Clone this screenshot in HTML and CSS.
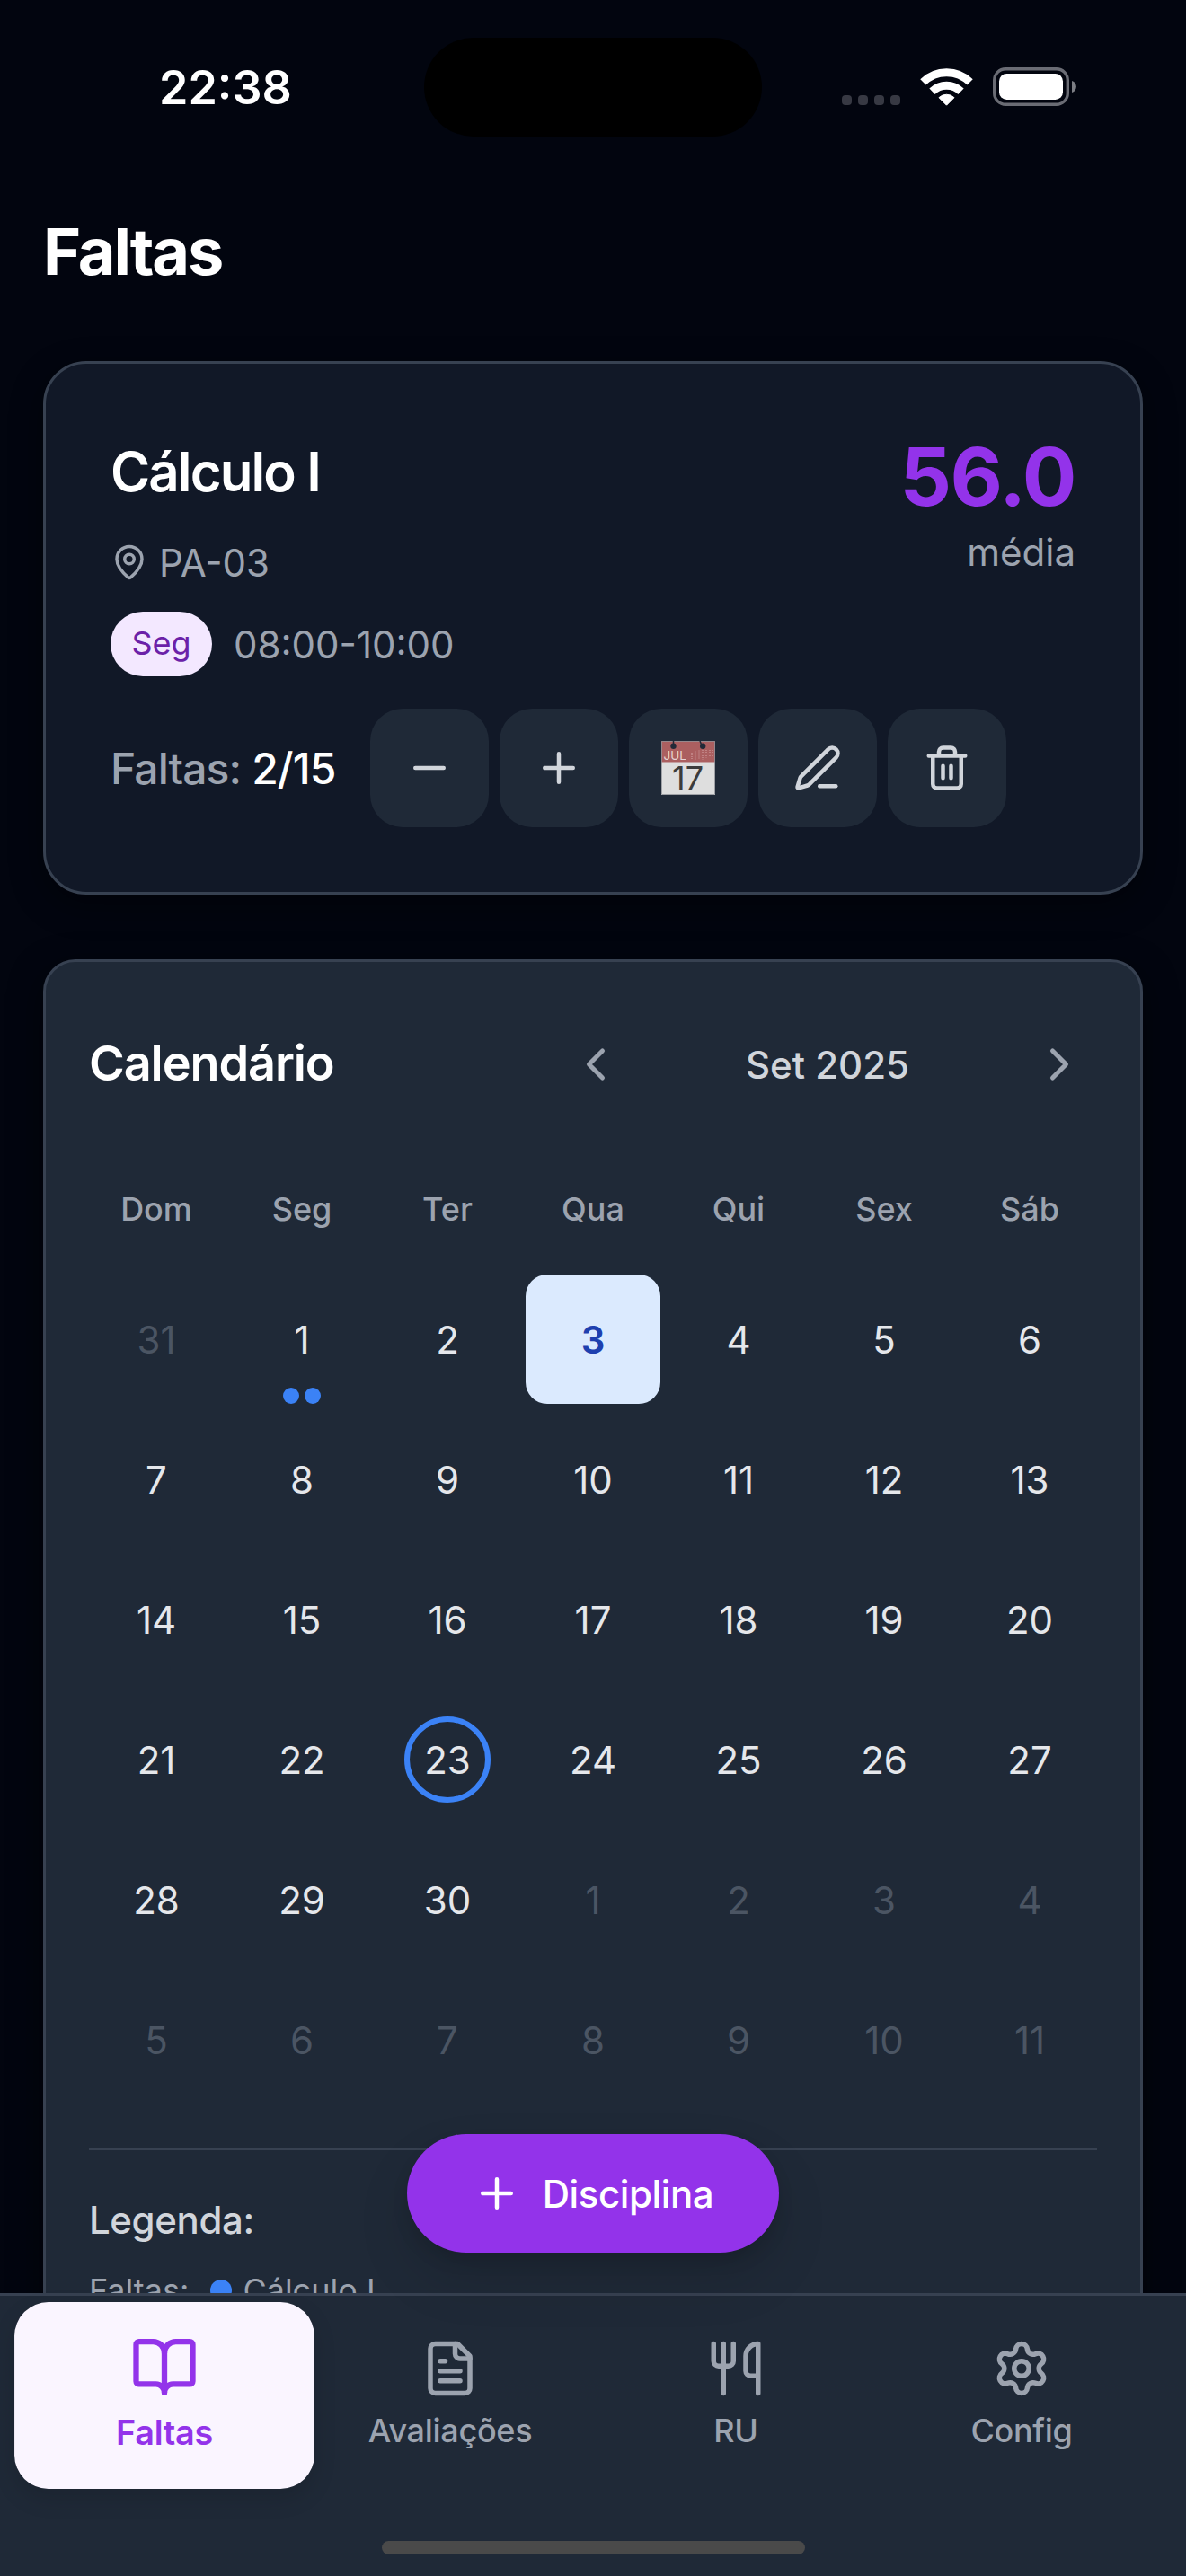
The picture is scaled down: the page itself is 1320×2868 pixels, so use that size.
FILE: index.html
```html
<!DOCTYPE html>
<html lang="pt-BR">
<head>
<meta charset="utf-8">
<title>Faltas</title>
<link rel="stylesheet" href="styles.css">
</head>
<body>
<div class="screen">
  <header class="status">
    <span class="clock">22:38</span>
    <span class="island"></span>
    <span class="indicators">
      <span class="signal"><i></i><i></i><i></i><i></i></span>
      <svg class="wifi" viewBox="0 0 57 42"><path d="M2.400 15.400a37.300 37.300 0 0 1 52.200 0M12.500 25.700a22.800 22.800 0 0 1 32 0" fill="none" stroke="#fff" stroke-width="9"/><path d="M28.500 41.200 20 32.700a12.200 12.200 0 0 1 17 0z" fill="#fff" stroke="#fff" stroke-linejoin="round"/></svg>
      <svg class="battery" viewBox="0 0 93 43"><rect x="1.700" y="1.700" width="81.600" height="39.600" rx="12.500" fill="none" stroke="#6a6c74" stroke-width="3.400"/><rect x="7" y="7" width="71" height="29" rx="8.500" fill="#fff"/><path d="M88 15c6.500 2 6.500 11 0 13z" fill="#7c7e84"/></svg>
    </span>
  </header>

  <main class="content">
    <h1 class="page-title">Faltas</h1>

    <section class="course">
      <div class="course-top">
        <div class="course-info">
          <h2 class="course-name">Cálculo I</h2>
          <div class="room">
            <svg class="icon" viewBox="0 0 24 24"><path d="M20 10c0 4.993-5.539 10.193-7.399 11.799a1 1 0 0 1-1.202 0C9.539 20.193 4 14.993 4 10a8 8 0 0 1 16 0"/><circle cx="12" cy="10" r="3"/></svg>
            <span>PA-03</span>
          </div>
          <div class="schedule"><span class="day-pill">Seg</span><span class="hours">08:00-10:00</span></div>
        </div>
        <div class="grade"><strong class="grade-value">56.0</strong><span class="grade-label">média</span></div>
      </div>
      <div class="course-actions">
        <span class="absences">Faltas: <b>2/15</b></span>
        <button class="action"><svg class="icon" viewBox="0 0 24 24"><path d="M5 12h14"/></svg></button>
        <button class="action"><svg class="icon" viewBox="0 0 24 24"><path d="M5 12h14M12 5v14"/></svg></button>
        <button class="action">
          <svg class="date-icon" viewBox="0 0 60 60"><path d="M0 0h60v24H0z" fill="#ab5f60"/><path d="M0 23.500h60V60H0z" fill="#dedede"/><path d="M.5.5h59v59H.5z" fill="none" stroke="#8f9298" stroke-width=".8"/><path d="M13.500 0v5M43 0l2 5" stroke="#212937" stroke-width="1.500"/><circle cx="13.500" cy="5.800" r="3.200" fill="#212937"/><circle cx="46.200" cy="5.800" r="3.200" fill="#212937"/><path d="M34 13v8M38 11.500v9.500M42 10.500v10M46 10v10.500M50 10v8.500M54 10v8M57 10v8" stroke="#d3a3a3" stroke-width="1.500" stroke-dasharray="1 1" opacity=".7"/><text class="date-month" x="2.500" y="20.600">JUL</text><text class="date-day" x="29.500" y="54">17</text></svg>
        </button>
        <button class="action"><svg class="icon" viewBox="0 0 24 24"><path d="M13 21h8"/><path d="M21.174 6.812a1 1 0 0 0-3.986-3.987L3.842 16.174a2 2 0 0 0-.5.830l-1.321 4.352a.5.5 0 0 0 .623.622l4.353-1.320a2 2 0 0 0 .830-.497z"/></svg></button>
        <button class="action"><svg class="icon" viewBox="0 0 24 24"><path d="M3 6h18M19 6v14a2 2 0 0 1-2 2H7a2 2 0 0 1-2-2V6M8 6V4a2 2 0 0 1 2-2h4a2 2 0 0 1 2 2v2M10 11v6M14 11v6"/></svg></button>
      </div>
    </section>

    <section class="calendar">
      <div class="calendar-head">
        <h2 class="calendar-title">Calendário</h2>
        <div class="month-nav">
          <svg class="icon" viewBox="0 0 24 24"><path d="m15 18-6-6 6-6"/></svg>
          <span class="month">Set 2025</span>
          <svg class="icon" viewBox="0 0 24 24"><path d="m9 18 6-6-6-6"/></svg>
        </div>
      </div>
      <div class="weekdays"><span>Dom</span><span>Seg</span><span>Ter</span><span>Qua</span><span>Qui</span><span>Sex</span><span>Sáb</span></div>
      <div class="days">
        <span class="out">31</span><span class="marked">1<em class="dots"><i></i><i></i></em></span><span>2</span><span class="selected">3</span><span>4</span><span>5</span><span>6</span>
        <span>7</span><span>8</span><span>9</span><span>10</span><span>11</span><span>12</span><span>13</span>
        <span>14</span><span>15</span><span>16</span><span>17</span><span>18</span><span>19</span><span>20</span>
        <span>21</span><span>22</span><span><b class="today">23</b></span><span>24</span><span>25</span><span>26</span><span>27</span>
        <span>28</span><span>29</span><span>30</span><span class="out">1</span><span class="out">2</span><span class="out">3</span><span class="out">4</span>
        <span class="out">5</span><span class="out">6</span><span class="out">7</span><span class="out">8</span><span class="out">9</span><span class="out">10</span><span class="out">11</span>
      </div>
      <div class="legend">
        <h3 class="legend-title">Legenda:</h3>
        <div class="legend-row"><span>Faltas:</span><i class="legend-dot"></i><span>Cálculo I</span></div>
      </div>
    </section>
  </main>

  <nav class="tabs">
    <a class="tab active"><svg class="icon" viewBox="0 0 24 24"><path d="M12 7v14"/><path d="M3 18a1 1 0 0 1-1-1V4a1 1 0 0 1 1-1h5a4 4 0 0 1 4 4 4 4 0 0 1 4-4h5a1 1 0 0 1 1 1v13a1 1 0 0 1-1 1h-6a3 3 0 0 0-3 3 3 3 0 0 0-3-3z"/></svg><span>Faltas</span></a>
    <a class="tab"><svg class="icon" viewBox="0 0 24 24"><path d="M15 2H6a2 2 0 0 0-2 2v16a2 2 0 0 0 2 2h12a2 2 0 0 0 2-2V7Z"/><path d="M14 2v4a2 2 0 0 0 2 2h4M10 9H8M16 13H8M16 17H8"/></svg><span>Avaliações</span></a>
    <a class="tab"><svg class="icon" viewBox="0 0 24 24"><path d="M3 2v7c0 1.100.9 2 2 2h4a2 2 0 0 0 2-2V2M7 2v20M21 15V2a5 5 0 0 0-5 5v6c0 1.100.9 2 2 2h3Zm0 0v7"/></svg><span>RU</span></a>
    <a class="tab"><svg class="icon" viewBox="0 0 24 24"><path d="M9.671 4.136a2.340 2.340 0 0 1 4.659 0 2.340 2.340 0 0 0 3.319 1.915 2.340 2.340 0 0 1 2.330 4.033 2.340 2.340 0 0 0 0 3.831 2.340 2.340 0 0 1-2.330 4.033 2.340 2.340 0 0 0-3.319 1.915 2.340 2.340 0 0 1-4.659 0 2.340 2.340 0 0 0-3.320-1.915 2.340 2.340 0 0 1-2.330-4.033 2.340 2.340 0 0 0 0-3.831A2.340 2.340 0 0 1 6.350 6.051a2.340 2.340 0 0 0 3.319-1.915"/><circle cx="12" cy="12" r="3"/></svg><span>Config</span></a>
  </nav>
  <button class="fab"><svg class="icon" viewBox="0 0 24 24"><path d="M5 12h14M12 5v14"/></svg><span>Disciplina</span></button>
  <span class="home-bar"></span>
</div>
</body>
</html>
```
FILE: styles.css
```css
* { box-sizing: border-box; }
body { margin: 0; background: #02050f; font-family: Inter, "Liberation Sans", sans-serif; }
h1, h2, h3 { margin: 0; font-weight: 600; }
button { border: 0; padding: 0; font: inherit; }
.icon { display: block; width: 48px; height: 48px; fill: none; stroke: currentColor; stroke-width: 2; stroke-linecap: round; stroke-linejoin: round; }

.screen { position: relative; display: flex; flex-direction: column; width: 1320px; height: 2868px; overflow: hidden; background: #02050f; color: #fff; }

.status { position: relative; flex: none; display: flex; justify-content: space-between; align-items: center; height: 195px; padding: 0 122px 0 177px; }
.clock { font-size: 52px; font-weight: 600; }
.island { position: absolute; left: 472px; top: 42px; width: 376px; height: 110px; border-radius: 55px; background: #000; }
.indicators { display: flex; align-items: center; margin-top: -2px; }
.signal { display: flex; gap: 7px; margin: 30px 23px 0 0; }
.signal i { width: 11px; height: 11px; border-radius: 4px; background: #373943; }
.wifi { width: 57px; height: 42px; margin-right: 23px; overflow: visible; }
.battery { width: 93px; height: 43px; }

.content { flex: 1; min-height: 0; overflow: hidden; padding: 0 48px; margin: 0; }
.page-title { height: 207px; padding-top: 40px; font-size: 72px; line-height: 90px; font-weight: 700; letter-spacing: -2.2px; }

.course { height: 594px; padding: 69px 72px 0; border: 3px solid #374151; border-radius: 48px; background: #111827; box-shadow: 0 12px 36px rgba(0, 0, 0, .4); }
.course-top { display: flex; justify-content: space-between; height: 315px; }
.course-name { height: 102px; font-size: 60px; line-height: 102px; letter-spacing: -1.9px; }
.room { display: flex; align-items: center; gap: 12px; height: 72px; margin-top: 14px; color: #9ca3af; font-size: 42px; }
.room .icon { width: 42px; height: 42px; }
.schedule { display: flex; align-items: center; gap: 24px; height: 72px; margin-top: 19px; }
.day-pill { width: 113px; height: 72px; border-radius: 36px; background: #f3e8ff; color: #6b21a8; font-size: 36px; line-height: 71px; text-align: center; }
.hours { color: #9ca3af; font-size: 42px; }
.grade { display: flex; flex-direction: column; align-items: flex-end; }
.grade-value { height: 111px; font-size: 90px; line-height: 113px; font-weight: 700; letter-spacing: -1.5px; color: #9333ea; }
.grade-label { color: #9ca3af; font-size: 42px; line-height: 60px; }
.course-actions { display: flex; align-items: center; gap: 12px; }
.absences { width: 277px; color: #9ca3af; font-size: 48px; font-weight: 500; letter-spacing: -.9px; white-space: nowrap; }
.absences b { color: #fff; font-weight: 500; }
.action { display: flex; align-items: center; justify-content: center; width: 132px; height: 132px; border-radius: 36px; background: #1f2937; color: #d1d5db; }
.action .icon { width: 54px; height: 54px; }
.date-icon { width: 60px; height: 60px; overflow: visible; }
.date-month { fill: #e6d2d2; font-size: 13.5px; }
.date-day { fill: #3c3c3c; font-size: 36px; text-anchor: middle; }

.calendar { height: 1600px; margin-top: 72px; padding: 48px; border: 3px solid #374151; border-radius: 36px; background: #1f2937; box-shadow: 0 12px 36px rgba(0, 0, 0, .5); }
.calendar-head { display: flex; justify-content: space-between; align-items: center; height: 132px; }
.calendar-title { padding-bottom: 3px; font-size: 54px; letter-spacing: -1.1px; }
.month-nav { display: flex; justify-content: space-between; align-items: center; width: 600px; padding: 0 12px; color: #9ca3af; }
.month-nav .icon { width: 60px; height: 60px; }
.month { color: #d1d5db; font-size: 42px; font-weight: 500; }
.weekdays { display: grid; grid-template-columns: repeat(7, 1fr); gap: 12px; height: 168px; padding-top: 59px; color: #9ca3af; font-size: 36px; font-weight: 500; line-height: 72px; text-align: center; }
.days { display: grid; grid-template-columns: repeat(7, 1fr); grid-auto-rows: 144px; gap: 12px; color: #e5e7eb; font-size: 42px; }
.days > span { position: relative; display: flex; align-items: center; justify-content: center; }
.days .out { color: #4b5563; }
.days .selected { border-radius: 24px; background: #dbeafe; color: #1e40af; font-weight: 600; }
.dots { position: absolute; left: 54px; bottom: 0; display: flex; gap: 6px; }
.dots i { width: 18px; height: 18px; border-radius: 9px; background: #3b82f6; }
.today { display: flex; align-items: center; justify-content: center; width: 96px; height: 96px; border: 6px solid #3b82f6; border-radius: 48px; font-weight: 400; }
.legend { margin-top: 48px; padding-top: 48px; border-top: 3px solid #374151; }
.legend-title { color: #d1d5db; font-size: 42px; line-height: 60px; font-weight: 500; letter-spacing: -.4px; }
.legend-row { display: flex; align-items: center; height: 48px; margin-top: 24px; color: #9ca3af; font-size: 36px; }
.legend-dot { width: 24px; height: 24px; margin: 0 12px 0 24px; border-radius: 12px; background: #3b82f6; }

.tabs { flex: none; display: flex; height: 315px; padding: 12px 24px; border-top: 3px solid #374151; background: #1f2937; }
.tab { display: flex; flex: 1; flex-direction: column; align-items: center; height: 198px; padding-top: 36px; color: #9ca3af; font-size: 36px; font-weight: 500; line-height: 48px; letter-spacing: -.3px; }
.tab .icon { width: 66px; height: 66px; margin-bottom: 12px; }
.tab.active { transform: scale(1.05); padding-top: 33px; border-radius: 36px; background: #faf5ff; color: #9333ea; font-weight: 600; box-shadow: 0 10px 24px rgba(0, 0, 0, .12); }
.tab.active .icon { width: 72px; height: 72px; margin-bottom: 9px; }
.fab { position: absolute; left: 453px; top: 2376px; display: flex; align-items: center; justify-content: center; gap: 24px; width: 414px; height: 132px; border-radius: 66px; background: #9333ea; color: #fff; font-size: 42px; font-weight: 500; letter-spacing: -.4px; box-shadow: 0 30px 60px rgba(0, 0, 0, .12), 0 10px 18px rgba(0, 0, 0, .1); }
.fab .icon { width: 54px; height: 54px; }
.home-bar { position: absolute; left: 425px; top: 2829px; width: 471px; height: 15px; border-radius: 8px; background: #4a4a4a; }
```
